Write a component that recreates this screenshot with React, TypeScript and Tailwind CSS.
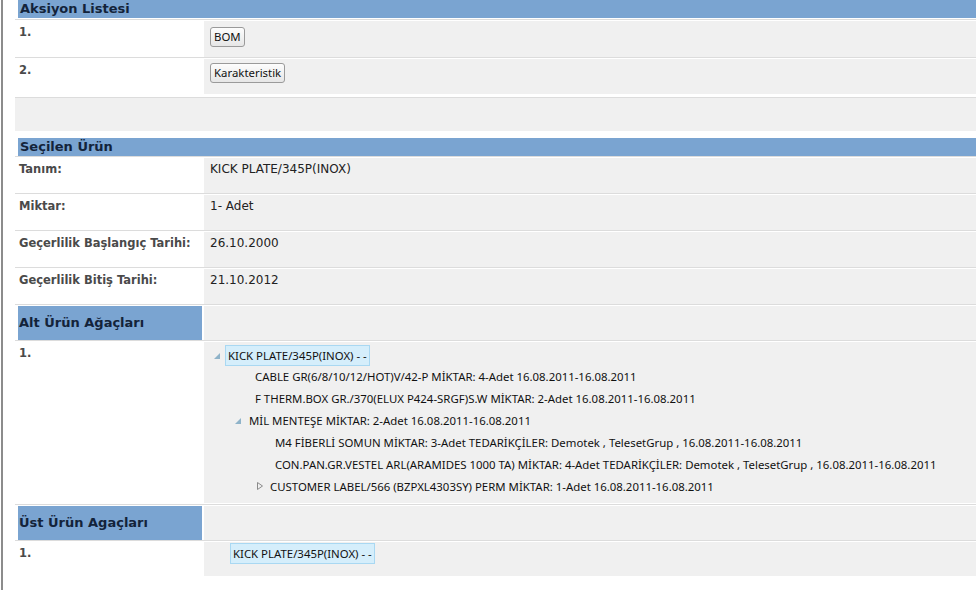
import React from "react";

const LBL = "font-['DejaVu_Sans',Verdana,sans-serif]";
const TREE = "font-['Noto_Sans','Open_Sans',sans-serif]";
const LABEL_CLS = `ml-[3px] w-[184px] shrink-0 bg-white pl-px pt-[5px] text-[11.5px] font-bold leading-[13px] text-[#4a4a4a] ${LBL}`;

function SectionHeader({ title }: { title: string }) {
  return (
    <div className={`ml-[3px] h-[18px] bg-[#7aa4d1] pl-[2px] text-[13px] font-bold leading-[18px] text-[#13233a] ${LBL}`}>
      {title}
    </div>
  );
}

function Row({ label, children, h = 35 }: { label: React.ReactNode; children?: React.ReactNode; h?: number }) {
  return (
    <div className="border-t border-[#dcdcdc] pt-px">
      <div className="flex" style={{ height: h }}>
        <div className={LABEL_CLS}>{label}</div>
        <div className={`ml-[2px] flex-1 bg-[#f0f0f0] pl-[6px] pt-[5px] text-[12px] leading-[13px] text-[#222] ${LBL}`}>
          {children}
        </div>
      </div>
    </div>
  );
}

function Btn({ children }: { children: React.ReactNode }) {
  return (
    <button
      className={`h-[20px] rounded-[3px] border border-[#9a9a9a] bg-gradient-to-b from-[#fdfdfd] to-[#e6e6e6] px-[3px] text-[11.4px] leading-[18px] text-[#111] ${TREE}`}
    >
      {children}
    </button>
  );
}

function Expanded() {
  return (
    <svg width="6" height="6" viewBox="0 0 6 6" className="shrink-0">
      <polygon points="6,0 6,6 0,6" fill="#8fb3c9" />
    </svg>
  );
}

function Collapsed() {
  return (
    <svg width="6" height="8" viewBox="0 0 6 8" className="shrink-0">
      <polygon points="0.5,0.5 5.5,4 0.5,7.5" fill="none" stroke="#8a8a8a" strokeWidth="1" />
    </svg>
  );
}

function TreeItem({
  indent,
  icon,
  selected,
  children,
}: {
  indent: number;
  icon?: "open" | "closed";
  selected?: boolean;
  children: React.ReactNode;
}) {
  return (
    <div className="flex h-[22px] items-center" style={{ paddingLeft: indent }}>
      {icon === "open" && (
        <span className="mr-[5px] flex w-[6px] items-center pt-[2px]">
          <Expanded />
        </span>
      )}
      {icon === "closed" && (
        <span className="mr-[4px] flex w-[6px] items-center">
          <Collapsed />
        </span>
      )}
      <span
        className={`whitespace-nowrap px-[2px] text-[11.4px] leading-[19px] text-[#111] ${TREE} ${
          selected ? "border border-[#a9d8f2] bg-[#d5eefb]" : "border border-transparent"
        }`}
      >
        {children}
      </span>
    </div>
  );
}

export default function App() {
  return (
    <div className="min-h-[590px] w-[976px] overflow-hidden bg-white">
      <div className="ml-px min-h-[590px] border-l-2 border-[#8c8c8c] pl-[12px]">
        <SectionHeader title="Aksiyon Listesi" />
        <div className="border-t border-[#dcdcdc] pt-px mt-px">
          <div className="flex h-[36px]">
            <div className={LABEL_CLS}>1.</div>
            <div className="ml-[2px] flex-1 bg-[#f0f0f0] pl-[6px] pt-[2px]">
              <Btn>BOM</Btn>
            </div>
          </div>
        </div>
        <div className="border-t border-[#dcdcdc] pt-px">
          <div className="flex h-[35px]">
            <div className={LABEL_CLS}>2.</div>
            <div className="ml-[2px] flex-1 bg-[#f0f0f0] pl-[6px] pt-0">
              <Btn>Karakteristik</Btn>
            </div>
          </div>
        </div>
        <div className="mt-[3px] border-t border-[#dcdcdc]">
          <div className="h-[33px] bg-[#f0f0f0]" />
        </div>

        <div className="mt-[7px]">
          <SectionHeader title="Seçilen Ürün" />
        </div>
        <Row label="Tanım:">KICK PLATE/345P(INOX)</Row>
        <Row label="Miktar:">1- Adet</Row>
        <Row label="Geçerlilik Başlangıç Tarihi:">26.10.2000</Row>
        <Row label="Geçerlilik Bitiş Tarihi:">21.10.2012</Row>

        <div className="border-t border-[#dcdcdc] pt-px">
          <div className="flex h-[34px]">
            <div className={`ml-[3px] flex w-[184px] shrink-0 items-center bg-[#7aa4d1] pl-px text-[13px] font-bold text-[#13233a] ${LBL}`}>
              Alt Ürün Ağaçları
            </div>
            <div className="ml-[2px] flex-1 bg-[#f0f0f0]" />
          </div>
        </div>
        <div className="border-t border-[#dcdcdc] pt-px">
          <div className="flex h-[161px]">
            <div className={LABEL_CLS}>1.</div>
            <div className="ml-[2px] flex-1 bg-[#f0f0f0] pt-[3px]">
              <div className="-mt-[1px]" />
              <TreeItem indent={10} icon="open" selected>KICK PLATE/345P(INOX) - -</TreeItem>
              <div className="-mt-[1px]" />
              <TreeItem indent={48}>CABLE GR(6/8/10/12/HOT)V/42-P MİKTAR: 4-Adet 16.08.2011-16.08.2011</TreeItem>
              <TreeItem indent={48}>F THERM.BOX GR./370(ELUX P424-SRGF)S.W MİKTAR: 2-Adet 16.08.2011-16.08.2011</TreeItem>
              <TreeItem indent={31} icon="open">MİL MENTEŞE MİKTAR: 2-Adet 16.08.2011-16.08.2011</TreeItem>
              <TreeItem indent={68}>M4 FİBERLİ SOMUN MİKTAR: 3-Adet TEDARİKÇİLER: Demotek , TelesetGrup , 16.08.2011-16.08.2011</TreeItem>
              <TreeItem indent={68}>CON.PAN.GR.VESTEL ARL(ARAMIDES 1000 TA) MİKTAR: 4-Adet TEDARİKÇİLER: Demotek , TelesetGrup , 16.08.2011-16.08.2011</TreeItem>
              <TreeItem indent={53} icon="closed">CUSTOMER LABEL/566 (BZPXL4303SY) PERM MİKTAR: 1-Adet 16.08.2011-16.08.2011</TreeItem>
            </div>
          </div>
        </div>

        <div className="mt-px border-t border-[#dcdcdc] pt-px">
          <div className="flex h-[34px]">
            <div className={`ml-[3px] flex w-[184px] shrink-0 items-center bg-[#7aa4d1] pl-px text-[13px] font-bold text-[#13233a] ${LBL}`}>
              Üst Ürün Agaçları
            </div>
            <div className="ml-[2px] flex-1 bg-[#f0f0f0]" />
          </div>
        </div>
        <div className="border-t border-[#dcdcdc] pt-px">
          <div className="flex h-[34px]">
            <div className={LABEL_CLS}>1.</div>
            <div className="ml-[2px] flex-1 bg-[#f0f0f0] pt-0">
              <TreeItem indent={26} selected>KICK PLATE/345P(INOX) - -</TreeItem>
            </div>
          </div>
        </div>
      </div>
    </div>
  );
}
